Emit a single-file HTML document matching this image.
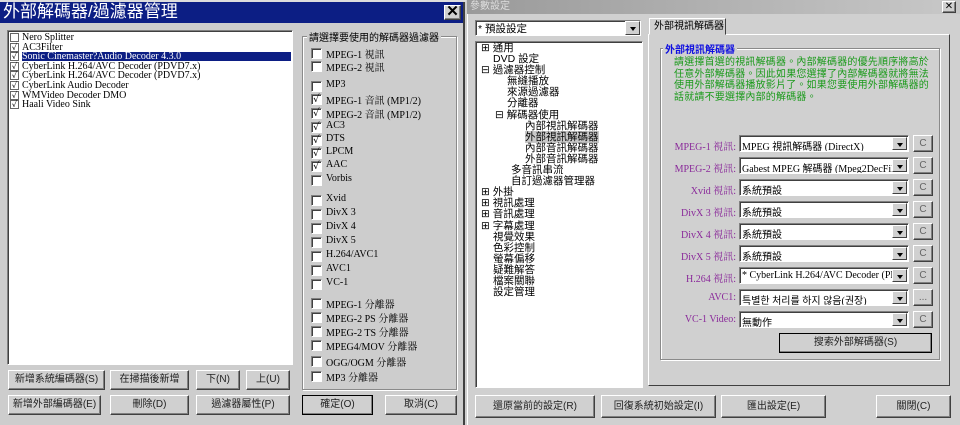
<!DOCTYPE html>
<html><head><meta charset="utf-8">
<style>
*{margin:0;padding:0;box-sizing:border-box}
body{width:960px;height:425px;overflow:hidden;background:#cfcfcf;font-family:"Liberation Serif","Noto Serif CJK SC","Noto Sans CJK TC",serif;font-size:11px;color:#000;position:relative}
.a{position:absolute;white-space:nowrap}
.sans{font-family:"Liberation Sans","Noto Sans CJK TC",sans-serif}
.btn{position:absolute;white-space:nowrap;overflow:hidden;background:#d0d0d0;border:1px solid;border-color:#fff #404040 #404040 #fff;box-shadow:inset -1px -1px 0 #808080;text-align:center;font-family:"Liberation Sans","Noto Sans CJK TC",sans-serif;font-size:10px;color:#222}
.sunk{position:absolute;background:#fff;border:1px solid;border-color:#808080 #fff #fff #808080;box-shadow:inset 1px 1px 0 #404040}
.grp{position:absolute;border:1px solid #8a8a8a;box-shadow:1px 1px 0 #fff,inset 1px 1px 0 #fff}
.cb{position:absolute;width:11px;height:11px;background:#fff;border:1px solid;border-color:#808080 #fff #fff #808080;box-shadow:inset 1px 1px 0 #404040;font-size:10px;line-height:9px;text-align:center;font-weight:bold}
.arr{position:absolute;width:15px;top:1px;bottom:1px;right:1px;background:#d0d0d0;border:1px solid;border-color:#fff #404040 #404040 #fff}
.arr:after{content:"";position:absolute;left:4px;top:5px;border:3px solid transparent;border-top:4px solid #000}
.lbl{position:absolute;color:#8a2a9a;text-align:right;width:80px;font-size:10px;white-space:nowrap}
.li{position:absolute;left:10px;height:9px;font-size:10px;line-height:9px;white-space:nowrap}
.li b{position:absolute;left:0;top:0;width:9px;height:9px;background:#fff;border:1px solid #666;font-size:8px;line-height:7px;text-align:center}
.li span{position:absolute;left:12px;top:0}
</style></head><body>
<div class="a" style="left:0;top:0;width:466px;height:2px;background:#ddd"></div>
<!-- LEFT DIALOG -->
<div class="a" style="left:0;top:2px;width:465px;height:423px;background:#cdcdcd;border-right:2px solid #404040"></div>
<div class="a" style="left:0;top:2px;width:463px;height:21px;background:#0c1e84"></div>
<div class="a sans" style="left:3px;top:2px;color:#fff;font-size:17px;line-height:20px">外部解碼器/過濾器管理</div>
<div class="btn" style="left:444px;top:5px;width:17px;height:15px;font-size:15px;line-height:12px;font-weight:bold;color:#000">✕</div>
<div class="sunk" style="left:7px;top:30px;width:286px;height:335px"></div>
<div id="lst"></div>
<div class="btn" style="left:8px;top:370px;width:97px;height:20px;line-height:18px">新增系統編碼器(S)</div>
<div class="btn" style="left:110px;top:370px;width:79px;height:20px;line-height:18px">在掃描後新增</div>
<div class="btn" style="left:196px;top:370px;width:44px;height:20px;line-height:18px">下(N)</div>
<div class="btn" style="left:246px;top:370px;width:44px;height:20px;line-height:18px">上(U)</div>
<div class="btn" style="left:8px;top:395px;width:93px;height:20px;line-height:18px">新增外部編碼器(E)</div>
<div class="btn" style="left:110px;top:395px;width:79px;height:20px;line-height:18px">刪除(D)</div>
<div class="btn" style="left:196px;top:395px;width:94px;height:20px;line-height:18px">過濾器屬性(P)</div>
<div class="btn" style="left:302px;top:395px;width:71px;height:20px;line-height:18px;border:1px solid #000">確定(O)</div>
<div class="btn" style="left:385px;top:395px;width:72px;height:20px;line-height:18px">取消(C)</div>
<div class="grp" style="left:302px;top:36px;width:155px;height:354px"></div>
<div class="a sans" style="left:307px;top:29px;background:#cdcdcd;padding:0 2px;font-size:10px">請選擇要使用的解碼器過濾器</div>
<div id="cbl"></div>
<!-- RIGHT DIALOG -->
<div class="a" style="left:467px;top:0;width:493px;height:425px;background:#d0d0d0;border-left:1px solid #fff"></div>
<div class="a" style="left:467px;top:0;width:493px;height:14px;background:linear-gradient(90deg,#9a9a9a,#c8c8c8)"></div>
<div class="a sans" style="left:470px;top:0;font-size:10px;color:#ddd;line-height:13px">參數設定</div>
<div class="btn" style="left:942px;top:1px;width:14px;height:12px;font-size:10px;line-height:9px;color:#000">✕</div>
<div class="sunk" style="left:475px;top:20px;width:166px;height:16px"></div>
<div class="a sans" style="left:478px;top:21px;font-size:10.5px">* 預設設定</div>
<div class="arr" style="left:625px;top:21px;width:15px;height:14px;right:auto;position:absolute"></div>
<div class="sunk" style="left:475px;top:41px;width:168px;height:347px"></div>
<div style="position:absolute;left:481px;top:43px;font-size:10.5px;line-height:11.1px;white-space:nowrap" class="sans">
<div>⊞ 通用</div><div style="padding-left:12px">DVD 設定</div><div>⊟ 過濾器控制</div>
<div style="padding-left:26px">無縫播放</div><div style="padding-left:26px">來源過濾器</div><div style="padding-left:26px">分離器</div>
<div style="padding-left:14px">⊟ 解碼器使用</div>
<div style="padding-left:44px">內部視訊解碼器</div><div style="padding-left:44px"><span style="background:#c8c8c8">外部視訊解碼器</span></div>
<div style="padding-left:44px">內部音訊解碼器</div><div style="padding-left:44px">外部音訊解碼器</div>
<div style="padding-left:30px">多音訊串流</div><div style="padding-left:30px">自訂過濾器管理器</div>
<div>⊞ 外掛</div><div>⊞ 視訊處理</div><div>⊞ 音訊處理</div><div>⊞ 字幕處理</div>
<div style="padding-left:12px">視覺效果</div><div style="padding-left:12px">色彩控制</div><div style="padding-left:12px">螢幕偏移</div><div style="padding-left:12px">疑難解答</div><div style="padding-left:12px">檔案關聯</div><div style="padding-left:12px">設定管理</div>
</div>
<div class="a" style="left:648px;top:34px;width:302px;height:352px;border:1px solid;border-color:#fff #404040 #404040 #fff"></div>
<div class="a sans" style="left:649px;top:18px;width:77px;height:17px;border:1px solid;border-color:#fff #404040 transparent #fff;background:#d0d0d0;font-size:10px;padding-left:4px;line-height:16px">外部視訊解碼器</div>
<div class="grp" style="left:660px;top:48px;width:280px;height:312px"></div>
<div class="a sans" style="left:663px;top:41px;background:#d0d0d0;color:#1010e0;font-weight:bold;font-size:10px;padding:0 2px">外部視訊解碼器</div>
<div class="a sans" style="left:674px;top:57px;width:262px;white-space:normal;color:#1a9a1a;font-size:10px;line-height:11.5px;letter-spacing:0.2px">請選擇首選的視訊解碼器。內部解碼器的優先順序將高於任意外部解碼器。因此如果您選擇了內部解碼器就將無法使用外部解碼器播放影片了。如果您要使用外部解碼器的話就請不要選擇內部的解碼器。</div>
<div id="rows"></div>
<div class="btn" style="left:779px;top:333px;width:153px;height:20px;line-height:18px;border:1px solid #000">搜索外部解碼器(S)</div>
<div class="btn" style="left:475px;top:395px;width:120px;height:23px;line-height:21px">還原當前的設定(R)</div>
<div class="btn" style="left:601px;top:395px;width:115px;height:23px;line-height:21px">回復系統初始設定(I)</div>
<div class="btn" style="left:721px;top:395px;width:105px;height:23px;line-height:21px">匯出設定(E)</div>
<div class="btn" style="left:876px;top:395px;width:75px;height:23px;line-height:21px">關閉(C)</div>
<script>
var L=[["Nero Splitter",0],["AC3Filter",1],["Sonic Cinemaster?Audio Decoder 4.3.0",1],["CyberLink H.264/AVC Decoder (PDVD7.x)",1],["CyberLink H.264/AVC Decoder (PDVD7.x)",1],["CyberLink Audio Decoder",1],["WMVideo Decoder DMO",1],["Haali Video Sink",1]];
var h="";L.forEach(function(x,i){var y=33+i*9.6;h+='<div class="li" style="top:'+y+'px"><b>'+(x[1]?'✓':'')+'</b><span'+(i==2?' style="background:#0c1e84;color:#fff;width:269px"':'')+'>'+x[0]+'</span></div>';});
document.getElementById("lst").innerHTML=h;
var c=[["MPEG-1 視訊",53,0],["MPEG-2 視訊",66,0],["MP3",86,0],["MPEG-1 音訊 (MP1/2)",99,1],["MPEG-2 音訊 (MP1/2)",113,1],["AC3",127,1],["DTS",140,1],["LPCM",153,1],["AAC",166,1],["Vorbis",180,0],["Xvid",200,0],["DivX 3",214,0],["DivX 4",228,0],["DivX 5",242,0],["H.264/AVC1",256,0],["AVC1",270,0],["VC-1",284,0],["MPEG-1 分離器",303,0],["MPEG-2 PS 分離器",317,0],["MPEG-2 TS 分離器",331,0],["MPEG4/MOV 分離器",345,0],["OGG/OGM 分離器",361,0],["MP3 分離器",376,0]];
h="";c.forEach(function(x){h+='<div class="cb" style="left:311px;top:'+(x[1]-5)+'px">'+(x[2]?'✓':'')+'</div><div class="a" style="left:326px;top:'+(x[1]-7)+'px;font-size:10px">'+x[0]+'</div>';});
document.getElementById("cbl").innerHTML=h;
var r=[["MPEG-1 視訊:","MPEG 視訊解碼器 (DirectX)","C"],["MPEG-2 視訊:","Gabest MPEG 解碼器 (Mpeg2DecFilter.","C"],["Xvid 視訊:","系統預設","C"],["DivX 3 視訊:","系統預設","C"],["DivX 4 視訊:","系統預設","C"],["DivX 5 視訊:","系統預設","C"],["H.264 視訊:","* CyberLink H.264/AVC Decoder (PDV","C"],["AVC1:","특별한 처리를 하지 않음(권장)","..."],["VC-1 Video:","無動作","C"]];
h="";r.forEach(function(x,i){var y=135+i*22;h+='<div class="lbl" style="left:656px;top:'+(y+3)+'px">'+x[0]+'</div><div class="sunk" style="left:739px;top:'+y+'px;width:170px;height:17px;overflow:hidden"><span style="position:absolute;left:2px;top:2px;font-size:10px;white-space:nowrap;font-family:Liberation Serif,Noto Sans CJK TC,NanumGothic,serif">'+x[1]+'</span><div class="arr"></div></div><div class="btn" style="left:913px;top:'+y+'px;width:20px;height:17px;line-height:15px;font-size:10px;color:#666">'+x[2]+'</div>';});
document.getElementById("rows").innerHTML=h;
</script>
</body></html>
